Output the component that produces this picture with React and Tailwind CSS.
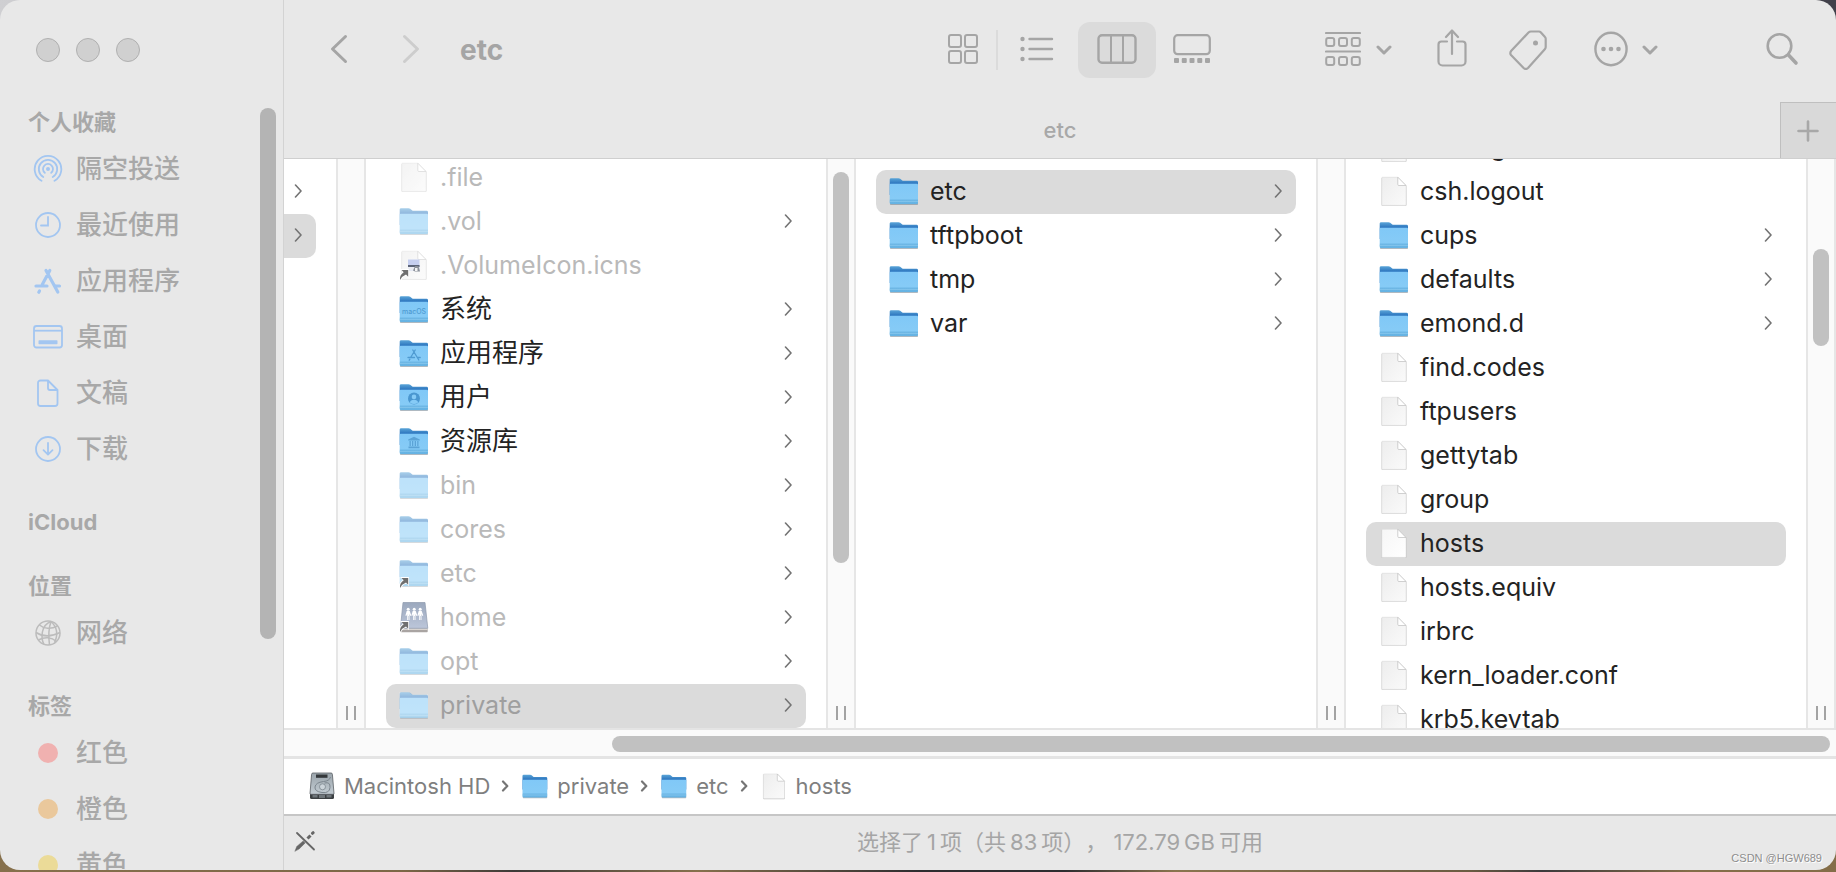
// src/App.jsx

import React, { useState } from 'react';

/* ---------- Toolbar icons ---------- */

function ChevronNav({ dir }) {
  return (
    <svg width="20" height="32" viewBox="0 0 20 32" fill="none" stroke="currentColor" strokeWidth="3" strokeLinecap="round" strokeLinejoin="round">
      <path d={dir === 'left' ? 'M16.5 2.500 3.500 15l13 12.500' : 'M3.500 2.500 16.500 15l-13 12.500'} />
    </svg>
  );
}

function ChevronDown() {
  return (
    <svg width="16" height="12" viewBox="0 0 16 12" fill="none" stroke="currentColor" strokeWidth="3" strokeLinecap="round" strokeLinejoin="round">
      <path d="M2 4l6 6 6-6" />
    </svg>
  );
}

function GridIcon() {
  return (
    <svg width="30" height="30" viewBox="0 0 30 30" fill="none" stroke="currentColor" strokeWidth="2">
      <rect x="1" y="1" width="12" height="12" rx="2" />
      <rect x="17" y="1" width="12" height="12" rx="2" />
      <rect x="1" y="17" width="12" height="12" rx="2" />
      <rect x="17" y="17" width="12" height="12" rx="2" />
    </svg>
  );
}

function ListIcon() {
  return (
    <svg width="34" height="26" viewBox="0 0 34 26" fill="currentColor">
      <circle cx="2.500" cy="3" r="2.200" />
      <circle cx="2.500" cy="13" r="2.200" />
      <circle cx="2.500" cy="23" r="2.200" />
      <path d="M9.500 3H32M9.500 13H32M9.500 23H32" stroke="currentColor" strokeWidth="2.400" strokeLinecap="round" />
    </svg>
  );
}

function ColumnsIcon() {
  return (
    <svg width="40" height="30" viewBox="0 0 40 30" fill="none" stroke="currentColor" strokeWidth="2.400">
      <rect x="1.500" y="1.200" width="37" height="27.600" rx="3.500" />
      <path d="M14 1v28M26 1v28" strokeWidth="2" />
    </svg>
  );
}

function GalleryIcon() {
  return (
    <svg width="38" height="30" viewBox="0 0 38 30" fill="none" stroke="currentColor" strokeWidth="2.200">
      <rect x="1.200" y="1.200" width="35.600" height="19" rx="3.500" />
      <g fill="currentColor" stroke="none">
        <rect x="1" y="24" width="5" height="5" rx="1" />
        <rect x="8.750" y="24" width="5" height="5" rx="1" />
        <rect x="16.500" y="24" width="5" height="5" rx="1" />
        <rect x="24.250" y="24" width="5" height="5" rx="1" />
        <rect x="32" y="24" width="5" height="5" rx="1" />
      </g>
    </svg>
  );
}

function GroupIcon() {
  return (
    <svg width="36" height="36" viewBox="0 0 36 36" fill="none" stroke="currentColor" strokeWidth="2">
      <path d="M1 2h34M1 20.500h34" strokeLinecap="round" strokeWidth="2.200" />
      {[7, 26].map((y) => (
        <g key={y}>
          <rect x="1.200" y={y} width="8" height="8" rx="2" />
          <rect x="14" y={y} width="8" height="8" rx="2" />
          <rect x="26.800" y={y} width="8" height="8" rx="2" />
        </g>
      ))}
    </svg>
  );
}

function ShareIcon() {
  return (
    <svg width="30" height="38" viewBox="0 0 30 38" fill="none" stroke="currentColor" strokeWidth="2.200" strokeLinecap="round" strokeLinejoin="round">
      <path d="M10 12.500H4.500a3 3 0 0 0-3 3v17a4 4 0 0 0 4 4h19a4 4 0 0 0 4-4v-17a3 3 0 0 0-3-3H20" />
      <path d="M15 25V2M9 8l6-6.500L21 8" />
    </svg>
  );
}

function TagIcon() {
  return (
    <svg width="38" height="40" viewBox="0 0 38 40" fill="none" stroke="currentColor" strokeWidth="2.200" strokeLinejoin="round">
      <path d="M19.500 2.500Q20.500 1.500 22 1.500H30Q31 1.500 31.700 2.200L36 7Q36.700 7.700 36.700 8.700V17Q36.700 18.200 35.800 19.200L19 38Q16.800 40 14.600 38L2 25Q.5 23 2.300 20.800Z" />
      <circle cx="26.500" cy="13" r="2.500" fill="currentColor" stroke="none" />
    </svg>
  );
}

function MoreIcon() {
  return (
    <svg width="34" height="36" viewBox="0 0 34 36" fill="none" stroke="currentColor" strokeWidth="2.400">
      <ellipse cx="17" cy="18" rx="15.600" ry="16.200" />
      <g fill="currentColor" stroke="none">
        <circle cx="9.500" cy="18" r="2.300" />
        <circle cx="17" cy="18" r="2.300" />
        <circle cx="24.500" cy="18" r="2.300" />
      </g>
    </svg>
  );
}

function SearchIcon() {
  return (
    <svg width="34" height="34" viewBox="0 0 34 34" fill="none" stroke="currentColor" strokeWidth="2.600" strokeLinecap="round">
      <circle cx="14.500" cy="14" r="11.800" />
      <path d="M23.500 23l7.500 8" strokeWidth="3.600" />
    </svg>
  );
}

function PlusIcon() {
  return (
    <svg width="22" height="22" viewBox="0 0 22 22" stroke="currentColor" strokeWidth="2.600" strokeLinecap="round">
      <path d="M11 1.500v19M1.500 11h19" />
    </svg>
  );
}

function PenSlashIcon() {
  return (
    <svg width="22" height="22" viewBox="0 0 22 22" stroke="currentColor" strokeLinecap="round" fill="currentColor">
      <path d="M3 2l17 16.500" strokeWidth="1.800" />
      <path d="M1 20l1.800-4.500 6.400-5.600 2 2-5.800 5.800z" strokeWidth=".5" />
      <path d="M13.500 7.500l3-3" strokeWidth="3" strokeLinecap="butt" />
      <path d="M18.500 2.300l.6-.6" strokeWidth="3" />
    </svg>
  );
}

/* ---------- Sidebar icons ---------- */

function AirdropIcon() {
  return (
    <svg width="30" height="30" viewBox="0 0 30 30" fill="none" stroke="currentColor" strokeWidth="1.800" strokeLinecap="round">
      <circle cx="15" cy="15" r="2" fill="currentColor" stroke="none" />
      <path d="M11.800 18.800a5 5 0 1 1 6.400 0" />
      <path d="M10.300 23a9.200 9.200 0 1 1 9.400 0" />
      <path d="M8.500 26.800a13.300 13.300 0 1 1 13 0" />
    </svg>
  );
}

function ClockIcon() {
  return (
    <svg width="30" height="30" viewBox="0 0 30 30" fill="none" stroke="currentColor" strokeWidth="1.800" strokeLinecap="round">
      <circle cx="15" cy="15" r="12" />
      <path d="M15 7v8.500H8" />
    </svg>
  );
}

function AppStoreIcon() {
  return (
    <svg width="30" height="30" viewBox="0 0 30 30" fill="none" stroke="currentColor" strokeWidth="3.200" strokeLinecap="round">
      <path d="M16.800 4.500L9.300 18.500M13 4.500l11.800 21.500M3 20h11M22.500 20H26.500M6.500 25l-.7 1.200" />
    </svg>
  );
}

function DesktopIcon() {
  return (
    <svg width="30" height="30" viewBox="0 0 30 30" fill="none" stroke="currentColor" strokeWidth="1.800">
      <rect x="1" y="4" width="28" height="21.500" rx="2.500" />
      <path d="M1 8.700h28" />
      <rect x="5.500" y="18.300" width="19" height="4" rx=".8" fill="currentColor" stroke="none" />
    </svg>
  );
}

function DocIcon() {
  return (
    <svg width="30" height="30" viewBox="0 0 30 30" fill="none" stroke="currentColor" strokeWidth="1.800" strokeLinejoin="round">
      <path d="M15 2.500H7.500A2.500 2.500 0 0 0 5 5v20.500A2.500 2.500 0 0 0 7.500 28H22a2.500 2.500 0 0 0 2.500-2.500V12zM15 2.500V10a2 2 0 0 0 2 2h7.500L15 2.500z" />
    </svg>
  );
}

function DownloadIcon() {
  return (
    <svg width="30" height="30" viewBox="0 0 30 30" fill="none" stroke="currentColor" strokeWidth="1.800" strokeLinecap="round" strokeLinejoin="round">
      <circle cx="15" cy="15" r="12" />
      <path d="M15 9v11.500M10.500 16.200l4.500 4.500 4.500-4.500" />
    </svg>
  );
}

function NetworkIcon() {
  return (
    <svg width="30" height="30" viewBox="0 0 30 30" fill="none" stroke="currentColor" strokeWidth="1.500">
      <circle cx="15" cy="15" r="12" />
      <path d="M18 3.500C8 7 7.500 20 11 26.500M18 3.500C15 12 15.500 20 16.500 27M18 3.500C24 9 25 17 21.500 24.800" />
      <path d="M6.500 7C11 11 18 11.500 24.500 8M3 14.500c7 4.500 16 4 24 0M5.500 22c6-3.500 13-3 18 1.500" />
    </svg>
  );
}

/* ---------- File icons ---------- */

// Degradados compartidos por todos los iconos de archivo
function IconDefs() {
  return (
    <svg width="0" height="0" className="absolute" aria-hidden="true">
      <defs>
        <linearGradient id="folderBack" x1="0" y1="0" x2="0" y2="1">
          <stop offset="0" stopColor="#5aa5d8" />
          <stop offset=".3" stopColor="#2f78c0" />
        </linearGradient>
        <linearGradient id="folderFront" x1="0" y1="0" x2="0" y2="1">
          <stop offset="0" stopColor="#80c8f7" />
          <stop offset=".76" stopColor="#86cbf6" />
          <stop offset=".8" stopColor="#68b4e4" />
          <stop offset="1" stopColor="#66b3e3" />
        </linearGradient>
        <linearGradient id="paper" x1="0" y1="0" x2="1" y2="1">
          <stop offset="0" stopColor="#ededed" />
          <stop offset="1" stopColor="#fafafa" />
        </linearGradient>
        <linearGradient id="paperLight" x1="0" y1="0" x2="1" y2="1">
          <stop offset="0" stopColor="#f6f6f6" />
          <stop offset="1" stopColor="#ffffff" />
        </linearGradient>
        <linearGradient id="metal" x1="0" y1="0" x2="0" y2="1">
          <stop offset="0" stopColor="#9aa4ab" />
          <stop offset="1" stopColor="#c3ccd3" />
        </linearGradient>
        <linearGradient id="slate" x1="0" y1="0" x2="0" y2="1">
          <stop offset="0" stopColor="#9ba8bd" />
          <stop offset="1" stopColor="#bcc6da" />
        </linearGradient>
      </defs>
    </svg>
  );
}

// Flecha de alias en la esquina inferior izquierda
function AliasArrow() {
  return (
    <g>
      <path d="M2 20h9v9l-2.600-2.600Q4 27.500 3 32H.5Q0 26 5 22.800z" fill="#fff" />
      <path d="M3.500 21h6.700v6.700L8 25.500Q4 27 2.300 31 1 26.500 5.700 23.200z" fill="#6f6f6f" />
    </g>
  );
}

function FolderBadge({ badge }) {
  if (badge === 'macos') {
    return (
      <text x="16" y="20.500" textAnchor="middle" fontSize="7" fontFamily="Inter, sans-serif" fontWeight="500" fill="#4f9bd2">
        macOS
      </text>
    );
  }
  if (badge === 'apps') {
    return (
      <path d="M17.200 13l-4.300 7M14.800 13l6 10M10 20.500h6.500M19.500 20.500h2.700M11.800 22.300l-.6.900" fill="none" stroke="#4f9bd2" strokeWidth="1.300" strokeLinecap="round" />
    );
  }
  if (badge === 'users') {
    return (
      <g>
        <circle cx="16" cy="17.600" r="6" fill="#4a97d0" />
        <circle cx="16" cy="15.900" r="2.300" fill="#86cbf6" />
        <path d="M11.900 21.400q.6-2.600 4.100-2.600t4.100 2.600q-1.800 1.500-4.100 1.500t-4.100-1.500z" fill="#86cbf6" />
      </g>
    );
  }
  if (badge === 'library') {
    return (
      <path d="M16 11.800l5.800 2.700v1H10.200v-1zM10.500 21.600h11v1.700h-11zM11.500 16.100h1.300v5h-1.300zM14 16.100h1.300v5H14zM16.700 16.100H18v5h-1.300zM19.200 16.100h1.300v5h-1.300z" fill="#5ba3d6" />
    );
  }
  return null;
}

function FolderIcon({ faded, alias, badge, className = 'size-8' }) {
  return (
    <svg className={className} viewBox="0 0 32 32">
      {faded && <path d="M1.700 3.500h9l3.500 2.200H30V28.500H1.700z" fill="#fff" />}
      <g opacity={faded ? 0.52 : 1}>
        <path d="M2 29.200q0 .8.800.8h26.400q.8 0 .8-.8V28H2z" fill="#6d7f8e" opacity=".55" />
        <path d="M1.700 4.600q0-1.400 1.400-1.400h7.400q1 0 1.700.6l1.800 1.500q.6.500 1.500.5h13.100q1.400 0 1.400 1.400V20H1.700z" fill="url(#folderBack)" />
        <path d="M1.700 9.800q0-1 1-1h26.300q1 0 1 1v18q0 1.200-1.200 1.200H2.900q-1.200 0-1.200-1.200z" fill="url(#folderFront)" />
        <path d="M1.700 26.300H30" stroke="#8fcbf0" strokeWidth=".8" />
        <FolderBadge badge={badge} />
      </g>
      {alias && <AliasArrow />}
    </svg>
  );
}

function FileIcon({ faded, alias, selected, preview, className = 'size-8' }) {
  return (
    <svg className={className} viewBox="0 0 32 32">
      <g opacity={faded ? 0.6 : 1}>
        <path d="M3.500 3.500q0-1 1-1H19.500L28.500 11v19q0 1-1 1h-23q-1 0-1-1z" fill="#b5b5b5" opacity=".7" />
        <path d="M3.800 3q0-.8.800-.8H19.800L28 10.500v19q0 .9-.9.900H4.700q-.9 0-.9-.9z" fill={selected ? 'url(#paperLight)' : 'url(#paper)'} stroke="#dadada" strokeWidth=".5" />
        <path d="M19.800 2.200V9.500q0 1 1 1H28z" fill="#fff" stroke="#bdbdbd" strokeWidth=".7" />
      </g>
      {preview && (
        <g>
          <rect x="10" y="10.500" width="11.500" height="11" fill="#c6cff0" />
          <rect x="10" y="16" width="11.500" height="2" fill="#5b6377" />
          <rect x="10" y="18" width="11.500" height="3.500" fill="#e9ebf2" />
          <path d="M15 21.500l2-4.500h3.500l1.500 5.500h-5z" fill="#8a8f99" />
          <path d="M17 19h2.500v3H17z" fill="#f4f4f4" />
        </g>
      )}
      {alias && <AliasArrow />}
    </svg>
  );
}

function SharedDriveIcon() {
  return (
    <svg className="size-8" viewBox="0 0 32 32">
      <path d="M2.500 28h27.200v2.500q0 .7-.7.700H3.200q-.7 0-.7-.7z" fill="#a9a4a2" />
      <path d="M2.500 27h27.200v2H2.500z" fill="#d9d4d0" />
      <path d="M5 1.500h22l2.800 25.800H2.400z" fill="url(#slate)" stroke="#8e99ad" strokeWidth=".7" />
      <g fill="#fff">
        {[10.200, 16.200, 22.200].map((x) => (
          <g key={x}>
            <circle cx={x} cy="8.300" r="1.500" />
            <path d={`M${x - 1.500} 10h3l1.600 4.500-.9.400-.9-2v6.200h-.9V15h-.5v4.100h-.9v-6.200l-.9 2-.9-.4z`} />
          </g>
        ))}
      </g>
      <AliasArrow />
    </svg>
  );
}

function HardDriveIcon() {
  return (
    <svg className="size-7" viewBox="0 0 28 28">
      <path d="M2 21h24v4.500q0 1.500-1.500 1.500h-21Q2 27 2 25.500z" fill="#3b3f42" />
      <path d="M4.500 23h5v2.500h-5zM11 23h6v3h-6zM18.500 23h5v2.500h-5z" fill="#6f767b" />
      <path d="M5 1h18q1.300 0 1.400 1.300L26 21.500q0 .8-.9.800H2.900q-.9 0-.9-.8L3.600 2.300Q3.700 1 5 1z" fill="url(#metal)" stroke="#5a6065" strokeWidth=".8" />
      <path d="M8 2.500h11.500v3.300H8z" fill="#34383b" />
      <path d="M22.500 5q-1 4-7 4.500-8 1-8.500 5.500t7 5.500 8-5-5.500-4.500" fill="none" stroke="#7c868e" strokeWidth="1" />
      <circle cx="14.500" cy="14.800" r="3" fill="#ccd4da" stroke="#7c868e" strokeWidth=".8" />
    </svg>
  );
}

function RowChevron() {
  return (
    <svg width="10" height="14" viewBox="0 0 10 14" fill="none" stroke="#737373" strokeWidth="1.600" strokeLinecap="round" strokeLinejoin="round">
      <path d="M2.500 1l5.500 6-5.500 6" />
    </svg>
  );
}

/* ---------- Data ---------- */

const sections = [
  {
    title: '个人收藏',
    items: [
      { name: '隔空投送', Icon: AirdropIcon },
      { name: '最近使用', Icon: ClockIcon },
      { name: '应用程序', Icon: AppStoreIcon },
      { name: '桌面', Icon: DesktopIcon },
      { name: '文稿', Icon: DocIcon },
      { name: '下载', Icon: DownloadIcon },
    ],
  },
  { title: 'iCloud', items: [] },
  { title: '位置', items: [{ name: '网络', Icon: NetworkIcon, muted: true }] },
  {
    title: '标签',
    items: [
      { name: '红色', dot: 'bg-[#f0b1b0]' },
      { name: '橙色', dot: 'bg-[#eac89c]' },
      { name: '黄色', dot: 'bg-[#ebdb98]' },
    ],
  },
];

const rootItems = [
  { name: '.file', type: 'file', faded: true },
  { name: '.vol', type: 'folder', faded: true },
  { name: '.VolumeIcon.icns', type: 'file', faded: true, alias: true, preview: true },
  { name: '系统', type: 'folder', badge: 'macos' },
  { name: '应用程序', type: 'folder', badge: 'apps' },
  { name: '用户', type: 'folder', badge: 'users' },
  { name: '资源库', type: 'folder', badge: 'library' },
  { name: 'bin', type: 'folder', faded: true },
  { name: 'cores', type: 'folder', faded: true },
  { name: 'etc', type: 'folder', faded: true, alias: true },
  { name: 'home', type: 'drive', faded: true },
  { name: 'opt', type: 'folder', faded: true },
  { name: 'private', type: 'folder', faded: true },
];

const privateItems = [
  { name: 'etc', type: 'folder' },
  { name: 'tftpboot', type: 'folder' },
  { name: 'tmp', type: 'folder' },
  { name: 'var', type: 'folder' },
];

const etcItems = [
  { name: 'csh.login', type: 'file' },
  { name: 'csh.logout', type: 'file' },
  { name: 'cups', type: 'folder' },
  { name: 'defaults', type: 'folder' },
  { name: 'emond.d', type: 'folder' },
  { name: 'find.codes', type: 'file' },
  { name: 'ftpusers', type: 'file' },
  { name: 'gettytab', type: 'file' },
  { name: 'group', type: 'file' },
  { name: 'hosts', type: 'file' },
  { name: 'hosts.equiv', type: 'file' },
  { name: 'irbrc', type: 'file' },
  { name: 'kern_loader.conf', type: 'file' },
  { name: 'krb5.keytab', type: 'file' },
];

const pathItems = [
  { name: 'Macintosh HD', type: 'disk' },
  { name: 'private', type: 'folder' },
  { name: 'etc', type: 'folder' },
  { name: 'hosts', type: 'file' },
];

// Espacios finos entre cifras y caracteres chinos
const statusText = '选择了\u20091\u2009项（共\u200983\u2009项）， 172.79\u2009GB\u2009可用';

/* ---------- Components ---------- */

function Sidebar() {
  return (
    <aside className="flex w-[284px] shrink-0 border-r border-[#d3d3d3]">
      <div className="flex min-w-0 flex-1 flex-col">
        <div className="flex h-[103px] shrink-0 gap-4 pt-[38px] pl-9">
          <button aria-label="关闭" className="size-6 rounded-full border border-[#b0b0b0] bg-[#d0d0d0]" />
          <button aria-label="最小化" className="size-6 rounded-full border border-[#b0b0b0] bg-[#d0d0d0]" />
          <button aria-label="缩放" className="size-6 rounded-full border border-[#b0b0b0] bg-[#d0d0d0]" />
        </div>
        <nav className="flex min-h-0 flex-1 flex-col gap-[26px] overflow-hidden text-[#a8a8a8]">
          {sections.map((section) => (
            <section key={section.title} className="shrink-0">
              <h2 className="h-[38px] pl-7 text-[22px] leading-[38px] font-bold">{section.title}</h2>
              {section.items.map(({ name, Icon, dot, muted }) => (
                <a key={name} href="#" className="flex h-14 items-center gap-[13px] pl-[33px] text-[26px] leading-8 font-medium">
                  <span className={muted ? 'flex w-[30px] justify-center text-[#bcbcbc]' : 'flex w-[30px] justify-center text-[#a3c6f1]'}>
                    {Icon ? <Icon /> : <span className={`size-5 rounded-full ${dot}`} />}
                  </span>
                  {name}
                </a>
              ))}
            </section>
          ))}
        </nav>
      </div>
      <div className="w-[23px] shrink-0 pt-[108px]">
        <div className="h-[531px] w-4 rounded-full bg-[#b4b4b4]" />
      </div>
    </aside>
  );
}

function Toolbar() {
  return (
    <div className="flex h-[102px] shrink-0 items-start pt-[22px] pr-[37px] pl-[45px] text-[#a5a5a5]">
      <div className="flex h-14 flex-1 items-center">
        <button aria-label="返回"><ChevronNav dir="left" /></button>
        <button aria-label="前进" className="ml-[52px] text-[#cdcdcd]"><ChevronNav dir="right" /></button>
        <h1 className="ml-[39px] text-[28px] leading-9 font-bold">etc</h1>
      </div>
      <div className="flex h-14 items-center">
        <button aria-label="图标" className="mr-[18px] pb-[2px]"><GridIcon /></button>
        <span className="h-10 w-[2px] bg-[#dbdbdb]" />
        <button aria-label="列表" className="ml-[22px] pb-[2px]"><ListIcon /></button>
        <button aria-label="分栏" className="ml-6 flex h-14 w-[78px] items-center justify-center rounded-xl bg-[#dbdbdb] pb-[2px]"><ColumnsIcon /></button>
        <button aria-label="画廊" className="ml-[17px] pb-[2px]"><GalleryIcon /></button>
        <button aria-label="群组" className="ml-[114px] flex items-center gap-[15px] pb-[2px]">
          <GroupIcon />
          <ChevronDown />
        </button>
        <button aria-label="共享" className="ml-[45px] pb-[4px]"><ShareIcon /></button>
        <button aria-label="标签" className="ml-[42px]"><TagIcon /></button>
        <button aria-label="更多" className="ml-[47px] flex items-center gap-[14px] pb-[2px]">
          <MoreIcon />
          <ChevronDown />
        </button>
        <button aria-label="搜索" className="ml-[107px] pb-[2px]"><SearchIcon /></button>
      </div>
    </div>
  );
}

function TabBar() {
  return (
    <div className="flex h-14 shrink-0 items-stretch text-[#a8a8a8]">
      <button className="flex-1 pl-14 text-[22px] leading-7 font-medium">etc</button>
      <button aria-label="新标签页" className="flex w-14 items-center justify-center border-t border-l border-[#bfbfbf] bg-[#d9d9d9] pr-[2px]">
        <PlusIcon />
      </button>
    </div>
  );
}

function ItemIcon({ item, selected }) {
  if (item.type === 'drive') return <SharedDriveIcon />;
  if (item.type === 'folder') return <FolderIcon faded={item.faded} alias={item.alias} badge={item.badge} />;
  return <FileIcon faded={item.faded} alias={item.alias} preview={item.preview} selected={selected} />;
}

function FileRow({ item, selected, onSelect }) {
  const cjk = /[\u4e00-\u9fff]/.test(item.name);
  return (
    <li>
      <button
        onClick={() => onSelect(item.name)}
        className={`flex h-11 w-full items-center rounded-[10px] pr-[13px] pb-[2px] pl-3 text-left ${selected ? 'bg-[#dbdbdb]' : ''}`}
      >
        <ItemIcon item={item} selected={selected} />
        <span
          className={`ml-[10px] flex-1 leading-8 ${cjk ? 'text-[26px]' : 'text-[25px]'} ${
            item.faded ? (selected ? 'text-[#9f9f9f]' : 'text-[#b9b9b9]') : 'text-[#232323]'
          }`}
        >
          {item.name}
        </span>
        {item.type !== 'file' && <RowChevron />}
      </button>
    </li>
  );
}

// Canal entre columnas, con la barra de desplazamiento y el tirador
function Gutter({ thumb }) {
  return (
    <div className="flex w-[30px] shrink-0 flex-col items-center justify-between border-x-2 border-[#e6e6e6] bg-[#fafafa] pb-2">
      <div className={thumb ? `w-4 rounded-full bg-[#c1c1c1] ${thumb}` : ''} />
      <div className="flex h-[14px] w-[10px] justify-between">
        <span className="w-[2px] bg-[#a3a3a3]" />
        <span className="w-[2px] bg-[#a3a3a3]" />
      </div>
    </div>
  );
}

function Column({ items, initial, listClass, thumb }) {
  const [selected, setSelected] = useState(initial);
  return (
    <div className="flex min-w-0 flex-1">
      <div className="flex min-w-0 flex-1 flex-col overflow-hidden px-5">
        <ul className={listClass}>
          {items.map((item) => (
            <FileRow key={item.name} item={item} selected={item.name === selected} onSelect={setSelected} />
          ))}
        </ul>
      </div>
      <Gutter thumb={thumb} />
    </div>
  );
}

function PathBar() {
  return (
    <div className="flex h-[55px] shrink-0 items-center bg-white pb-[2px] pl-6 text-[22px] leading-7 text-[#7f7f7f]">
      {pathItems.map((item, i) => (
        <React.Fragment key={item.name}>
          {i > 0 && (
            <svg className="mr-3 ml-[11px]" width="8" height="12" viewBox="0 0 8 12" fill="none" stroke="#757575" strokeWidth="2.200" strokeLinecap="round" strokeLinejoin="round">
              <path d="M2 1.500L6.300 6 2 10.500" />
            </svg>
          )}
          <button className="flex items-center gap-2">
            {item.type === 'disk' && <HardDriveIcon />}
            {item.type === 'folder' && <FolderIcon className="size-7" />}
            {item.type === 'file' && <FileIcon className="size-7" />}
            {item.name}
          </button>
        </React.Fragment>
      ))}
    </div>
  );
}

function App() {
  return (
    <div className="h-screen overflow-hidden bg-[linear-gradient(to_right,#86704c,#7c6746_22%,#3c3a38_28%,#86704c_38%,#2e2d30_50%,#2e2d30_58%,#8a744e_64%,#6b5c42_80%,#3c3a3c_84%,#846d48_92%),linear-gradient(to_right,#cfcfd2,#41404a_90%)] bg-[length:100%_40px,100%_100%] bg-bottom bg-no-repeat pb-[2px] font-[Inter,'Noto_Sans_CJK_SC',sans-serif]">
      <IconDefs />
      <div className="relative flex h-full overflow-hidden rounded-[20px] bg-[#e8e8e8]">
        <Sidebar />
        <main className="flex min-w-0 flex-1 flex-col">
          <Toolbar />
          <TabBar />

          {/* Vista por columnas */}
          <div className="flex min-h-0 flex-1 border-t border-[#cfcfcf] bg-white">
            <div className="flex w-[82px] shrink-0">
              <div className="flex flex-1 flex-col pt-[11px] pr-5">
                <button aria-label="文件夹" className="flex h-11 items-center pb-[2px] pl-[9px]"><RowChevron /></button>
                <button aria-label="Macintosh HD" className="flex h-11 items-center rounded-r-[10px] bg-[#dbdbdb] pb-[2px] pl-[9px]"><RowChevron /></button>
              </div>
              <Gutter />
            </div>
            <Column items={rootItems} initial="private" listClass="-mt-[3px]" thumb="mt-[13px] h-[391px]" />
            <Column items={privateItems} initial="etc" listClass="mt-[11px]" />
            <Column items={etcItems} initial="hosts" listClass="-mt-[33px]" thumb="mt-[90px] h-[97px]" />
          </div>

          <div className="h-[31px] shrink-0 border-t-2 border-b-3 border-[#e4e4e4] bg-[#fafafa] pt-[6px] pr-[6px] pl-[328px]">
            <div className="h-4 rounded-full bg-[#c1c1c1]" />
          </div>

          <PathBar />

          <footer className="flex h-14 shrink-0 items-center border-t-2 border-[#c6c6c6] pb-[2px] pl-[10px] text-[#a5a5a5]">
            <button aria-label="不可写" className="text-[#666666]"><PenSlashIcon /></button>
            <p className="flex-1 pr-8 text-center text-[22px] leading-7 [text-spacing-trim:space-all]">{statusText}</p>
          </footer>
        </main>
        <span className="absolute right-[14px] bottom-1 font-['Liberation_Sans',sans-serif] text-[11px] leading-4 text-[#8d8d8d] [text-shadow:1px_1px_0_#ffffff]">
          CSDN @HGW689
        </span>
      </div>
    </div>
  );
}

export default App;
